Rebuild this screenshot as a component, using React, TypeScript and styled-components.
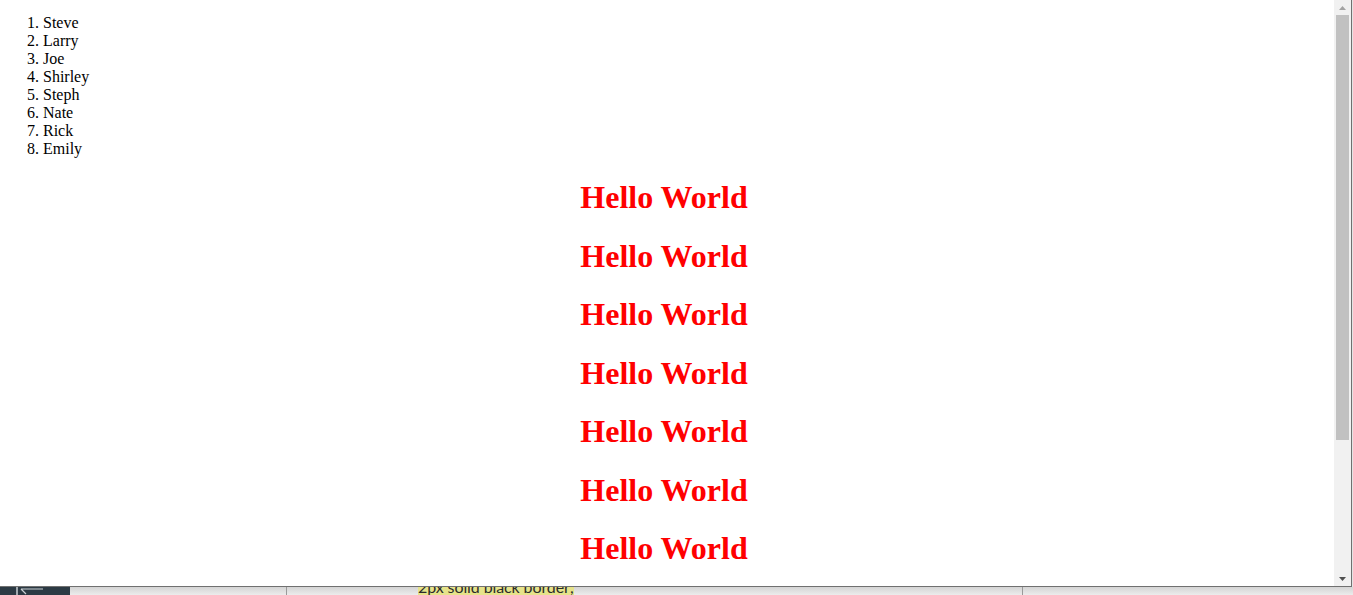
import React from "react";
import styled, { createGlobalStyle } from "styled-components";

const GlobalStyle = createGlobalStyle`
  html, body {
    margin: 0;
    padding: 0;
    overflow: hidden;
    background: #e4e4e4;
  }
`;

const names = ["Steve", "Larry", "Joe", "Shirley", "Steph", "Nate", "Rick", "Emily"];

const Screen = styled.div`
  display: flex;
  flex-direction: column;
  width: 1353px;
  height: 595px;
  overflow: hidden;
`;

const Frame = styled.div`
  display: flex;
  flex-direction: row;
  width: 1351px;
  height: 586px;
  flex: none;
  background: #fff;
  border-right: 1px solid #707070;
  border-bottom: 1px solid #707070;
`;

const Page = styled.div`
  flex: 1;
  overflow: hidden;
  padding: 14px 9px 0 3px;
  font-family: "Liberation Serif", "Times New Roman", serif;
  color: #000;
`;

const NameList = styled.ol`
  margin: 0;
  padding-left: 40px;
  font-size: 16px;
  line-height: 18px;
`;

const Heading = styled.h1`
  margin: 21.44px 0;
  font-size: 32px;
  line-height: 37px;
  font-weight: bold;
  color: #ff0000;
  text-align: center;
`;

const Scrollbar = styled.div`
  display: flex;
  flex-direction: column;
  width: 17px;
  background: #f1f1f1;
`;

const Arrow = styled.div<{ $dim?: boolean }>`
  height: 15px;
  display: flex;
  align-items: center;
  justify-content: center;
  color: ${(p) => (p.$dim ? "#a3a3a3" : "#505050")};
`;

const Track = styled.div`
  flex: 1;
  padding: 0 2px;
`;

const Thumb = styled.div`
  height: 425px;
  background: #c1c1c1;
`;

const Dock = styled.div`
  display: flex;
  flex-direction: row;
  height: 8px;
  flex: none;
  overflow: hidden;
  background: linear-gradient(#d4d4d4, #ececec);
  font-family: Lato, "Liberation Sans", sans-serif;
`;

const SideBlock = styled.div`
  width: 70px;
  flex: none;
  background: #2c3a44;
  padding-left: 16px;
  box-sizing: border-box;

  svg {
    display: block;
  }
`;

const Pane = styled.div<{ $width: number }>`
  width: ${(p) => p.$width}px;
  flex: none;
  border-right: 1px solid #9a9a9a;
  box-sizing: border-box;
`;

const EditorLine = styled.div`
  margin-top: -12px;
  padding-left: 131px;
  font-size: 16px;
  letter-spacing: -0.1px;
  line-height: 24px;
  color: #2b2b2b;
  white-space: nowrap;
`;

const Highlight = styled.span`
  background: #e6e38a;
`;

const Triangle = ({ up }: { up?: boolean }) => (
  <svg width="7" height="4" viewBox="0 0 7 4">
    <path d={up ? "M3.5 0 L7 4 L0 4 Z" : "M0 0 L7 0 L3.5 4 Z"} fill="currentColor" />
  </svg>
);

export default function App() {
  return (
    <>
      <GlobalStyle />
      <Screen>
        <Frame>
          <Page>
            <NameList>
              {names.map((n) => (
                <li key={n}>{n}</li>
              ))}
            </NameList>
            {Array.from({ length: 7 }).map((_, i) => (
              <Heading key={i}>Hello World</Heading>
            ))}
          </Page>
          <Scrollbar>
            <Arrow $dim>
              <Triangle up />
            </Arrow>
            <Track>
              <Thumb />
            </Track>
            <Arrow>
              <Triangle />
            </Arrow>
          </Scrollbar>
        </Frame>
        <Dock>
          <SideBlock>
            <svg width="28" height="8" viewBox="0 0 28 8">
              <path d="M1 0 V8" stroke="#c9cfd3" strokeWidth="1.5" />
              <path d="M5 2 H27 M5 2 L10 7" stroke="#c9cfd3" strokeWidth="1.2" fill="none" />
            </svg>
          </SideBlock>
          <Pane $width={217} />
          <Pane $width={736}>
            <EditorLine>
              <Highlight>2px solid black border;</Highlight>
            </EditorLine>
          </Pane>
        </Dock>
      </Screen>
    </>
  );
}
